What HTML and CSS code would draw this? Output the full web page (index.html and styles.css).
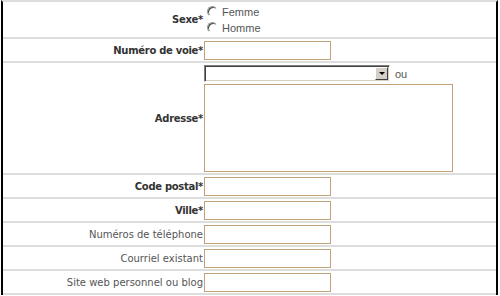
FILE: index.html
```html
<!DOCTYPE html>
<html lang="fr">
<head>
    <meta charset="UTF-8">
    <title>Inscription</title>
    <link rel="stylesheet" href="styles.css">
</head>
<body>
    <div class="form">
        <div class="row row-sexe">
            <label class="label req">Sexe*</label>
            <div class="field">
                <label class="radio"><input type="radio" name="sexe" value="F"><span>Femme</span></label>
                <label class="radio"><input type="radio" name="sexe" value="H"><span>Homme</span></label>
            </div>
        </div>
        <div class="row">
            <label class="label req" for="voie">Numéro de voie*</label>
            <div class="field"><input class="text" id="voie" type="text"></div>
        </div>
        <div class="row row-adresse">
            <label class="label req" for="adresse">Adresse*</label>
            <div class="field">
                <div class="combo-line">
                    <div class="combo">
                        <select></select>
                        <span class="arrow"></span>
                    </div>
                    <span class="ou">ou</span>
                </div>
                <textarea class="area" id="adresse"></textarea>
            </div>
        </div>
        <div class="row">
            <label class="label req" for="cp">Code postal*</label>
            <div class="field"><input class="text" id="cp" type="text"></div>
        </div>
        <div class="row">
            <label class="label req" for="ville">Ville*</label>
            <div class="field"><input class="text" id="ville" type="text"></div>
        </div>
        <div class="row">
            <label class="label" for="tel">Numéros de téléphone</label>
            <div class="field"><input class="text" id="tel" type="text"></div>
        </div>
        <div class="row">
            <label class="label" for="mail">Courriel existant</label>
            <div class="field"><input class="text" id="mail" type="text"></div>
        </div>
        <div class="row">
            <label class="label" for="site">Site web personnel ou blog</label>
            <div class="field"><input class="text" id="site" type="text"></div>
        </div>
    </div>
</body>
</html>
```

FILE: styles.css
```css
body {
    margin: 0;
    background: #fff;
    font-family: "DejaVu Sans", Verdana, sans-serif;
}
.form {
    margin-left: 1px;
    width: 497px;
    box-sizing: border-box;
    border-left: 2px solid #000;
    border-right: 2px solid #000;
    border-top: 2px solid #ddd;
}
.row {
    display: grid;
    grid-template-columns: 200px 1fr;
    align-items: center;
    height: 22px;
    border-bottom: 2px solid #ddd;
}
.row-sexe {
    height: 35px;
}
.row-adresse {
    height: 110px;
}
.label {
    text-align: right;
    font-size: 10px;
    color: #555;
    white-space: nowrap;
}
.label.req {
    font-weight: bold;
    color: #333;
    letter-spacing: -0.3px;
}
.field {
    padding-left: 1px;
}
.row-adresse .field {
    align-self: start;
    padding-top: 2px;
}
.text {
    display: block;
    width: 127px;
    height: 19px;
    box-sizing: border-box;
    margin: 0;
    padding: 0 2px;
    border: 1px solid #c2a27c;
    background: #fff;
}
.radio {
    display: flex;
    align-items: center;
    height: 16px;
    font-family: "Liberation Sans", Arial, sans-serif;
    font-size: 11px;
    color: #555;
}
.radio input {
    appearance: none;
    width: 11px;
    height: 11px;
    margin: 0 4px 0 3px;
    border-radius: 50%;
    border: 1px solid;
    border-color: #999 #fff #fff #999;
    box-shadow: inset 1px 1px #444;
    background: #fff;
}
.combo-line {
    display: flex;
    align-items: center;
    gap: 5px;
}
.combo {
    display: flex;
    width: 186px;
    height: 17px;
    box-sizing: border-box;
    border: 1px solid;
    border-color: #808080 #fff #fff #808080;
    box-shadow: inset 1px 1px #404040, inset -1px -1px #d4d0c8;
    padding: 1px;
    background: #fff;
}
.combo select {
    flex: 1;
    appearance: none;
    border: 0;
    background: transparent;
    margin: 0;
    padding: 0;
}
.arrow {
    width: 13px;
    box-sizing: border-box;
    background: #d4d0c8;
    border: 1px solid;
    border-color: #fff #404040 #404040 #fff;
    display: flex;
    align-items: center;
    justify-content: center;
}
.arrow::after {
    content: "";
    border-left: 3px solid transparent;
    border-right: 3px solid transparent;
    border-top: 3px solid #000;
}
.ou {
    font-family: "Liberation Sans", Arial, sans-serif;
    font-size: 11px;
    color: #555;
}
.area {
    display: block;
    width: 249px;
    height: 88px;
    box-sizing: border-box;
    margin: 2px 0 0;
    border: 1px solid #c2a27c;
    resize: none;
}
```
